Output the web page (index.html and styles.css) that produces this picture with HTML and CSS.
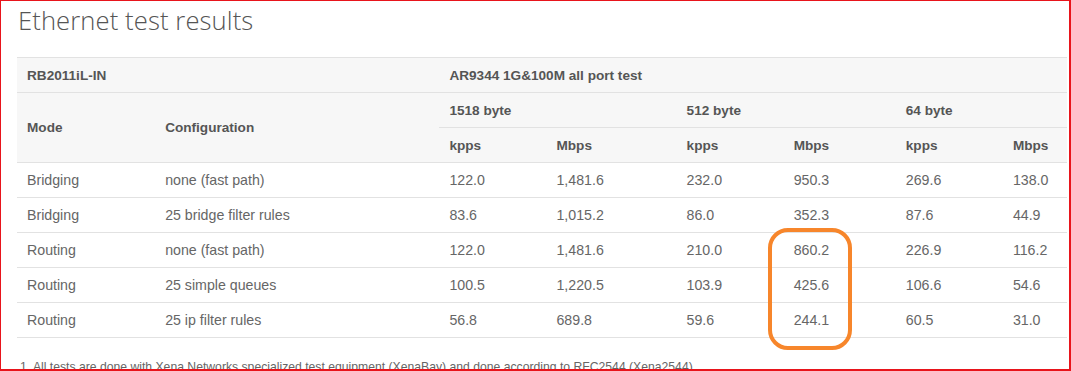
FILE: index.html
```html
<!DOCTYPE html>
<html>
<head>
<meta charset="utf-8">
<link rel="stylesheet" href="styles.css">
</head>
<body>
<div class="frame">
  <h1 class="title">Ethernet test results</h1>
  <table class="results">
    <colgroup>
      <col class="c-mode"><col class="c-conf"><col class="c-k"><col class="c-m1"><col class="c-k"><col class="c-m2"><col class="c-k"><col class="c-m3">
    </colgroup>
    <thead>
      <tr>
        <th colspan="2">RB2011iL-IN</th>
        <th colspan="6">AR9344 1G&amp;100M all port test</th>
      </tr>
      <tr>
        <th rowspan="2">Mode</th>
        <th rowspan="2">Configuration</th>
        <th colspan="2">1518 byte</th>
        <th colspan="2">512 byte</th>
        <th colspan="2">64 byte</th>
      </tr>
      <tr>
        <th>kpps</th><th>Mbps</th><th>kpps</th><th>Mbps</th><th>kpps</th><th>Mbps</th>
      </tr>
    </thead>
    <tbody>
      <tr><td>Bridging</td><td>none (fast path)</td><td>122.0</td><td>1,481.6</td><td>232.0</td><td>950.3</td><td>269.6</td><td>138.0</td></tr>
      <tr><td>Bridging</td><td>25 bridge filter rules</td><td>83.6</td><td>1,015.2</td><td>86.0</td><td>352.3</td><td>87.6</td><td>44.9</td></tr>
      <tr><td>Routing</td><td>none (fast path)</td><td>122.0</td><td>1,481.6</td><td>210.0</td><td>860.2</td><td>226.9</td><td>116.2</td></tr>
      <tr><td>Routing</td><td>25 simple queues</td><td>100.5</td><td>1,220.5</td><td>103.9</td><td>425.6</td><td>106.6</td><td>54.6</td></tr>
      <tr><td>Routing</td><td>25 ip filter rules</td><td>56.8</td><td>689.8</td><td>59.6</td><td>244.1</td><td>60.5</td><td>31.0</td></tr>
    </tbody>
  </table>
  <p class="note">1. All tests are done with Xena Networks specialized test equipment (XenaBay) and done according to RFC2544 (Xena2544).</p>
  <div class="highlight"></div>
</div>
</body>
</html>
```
FILE: styles.css
```css
html, body {
  margin: 0;
  padding: 0;
  background: #fff;
}
.frame {
  position: relative;
  width: 1071px;
  height: 371px;
  box-sizing: border-box;
  border: 2px solid #e8141b;
  border-top-width: 1px;
  border-left-width: 1px;
  overflow: hidden;
  padding: 0 0 0 16px;
  font-family: "Liberation Sans", Arial, sans-serif;
}
.title {
  margin: 5px 0 0 1px;
  font-family: "Open Sans", sans-serif;
  font-weight: 300;
  font-size: 25.6px;
  line-height: 30px;
  color: #555;
  letter-spacing: 0.1px;
}
.results {
  margin-top: 21px;
  border-collapse: collapse;
  table-layout: fixed;
  width: 1050px;
}
.c-mode { width: 138px; }
.c-conf { width: 284px; }
.c-k { width: 107px; }
.c-m1 { width: 130px; }
.c-m2 { width: 112px; }
.c-m3 { width: 64px; }
.results th,
.results td {
  height: 34px;
  padding: 0 10px;
  text-align: left;
  vertical-align: middle;
  border-top: 1px solid #e2e2e2;
  white-space: nowrap;
}
.results th {
  background: #f7f7f7;
  font-size: 13.6px;
  font-weight: bold;
  color: #555;
}
.results td {
  background: #fff;
  font-size: 14.2px;
  color: #666;
}
.results tbody tr:last-child td {
  border-bottom: 1px solid #e2e2e2;
}
.note {
  margin: 22px 0 0 3px;
  font-size: 12.2px;
  line-height: 15px;
  color: #666;
  white-space: nowrap;
}
.highlight {
  position: absolute;
  left: 767px;
  top: 227px;
  width: 84px;
  height: 122px;
  box-sizing: border-box;
  border: 4px solid #f7862b;
  border-radius: 20px;
}
```
